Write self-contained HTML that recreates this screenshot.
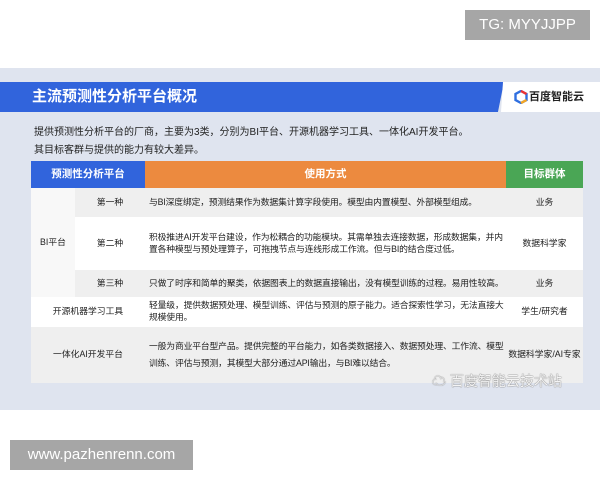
<!DOCTYPE html>
<html><head><meta charset="utf-8"><style>
*{margin:0;padding:0;box-sizing:border-box}
body{width:600px;height:480px;background:#fff;position:relative;overflow:hidden;font-family:"Liberation Sans","Noto Sans CJK SC",sans-serif;color:#222}
.abs{position:absolute}
.tg{left:465px;top:10px;width:125px;height:30px;background:#a6a6a6;color:#fff;font-size:15px;line-height:30px;text-align:center}
.wm{left:10px;top:440px;width:183px;height:30px;background:#a6a6a6;color:#fff;font-size:15px;line-height:30px;text-align:center}
.slide{left:0;top:68px;width:600px;height:342px;background:#dfe4ef}
.title{left:0;top:82px;width:504px;height:30px;background:#3164dc;clip-path:polygon(0 0,100% 0,98.8% 100%,0 100%);color:#fff;font-weight:bold;font-size:15px;line-height:30px;padding-left:32px}
.logo{left:501px;top:82px;width:99px;height:30px;background:#fff;clip-path:polygon(2px 0,100% 0,100% 100%,0 100%);font-size:11px;font-weight:bold;line-height:30px;padding-left:28px;color:#222}
.intro{left:34px;font-size:10px;color:#222}
.c{position:absolute;display:flex;align-items:center;justify-content:center;font-size:8.8px;text-align:center;line-height:1.35}
.l{justify-content:flex-start;text-align:left;padding-left:4px;letter-spacing:-0.15px;width:363px!important}
.h{color:#fff;font-weight:bold;font-size:10.5px}
</style></head><body>
<div class="abs tg">TG: MYYJJPP</div>
<div class="abs slide"></div>
<div class="abs title">主流预测性分析平台概况</div>
<div class="abs logo">百度智能云</div>
<svg class="abs" style="left:514px;top:90px" width="14" height="14" viewBox="0 0 14 14"><path d="M7 1 L12.5 4 L12.5 10 L7 13 L1.5 10 L1.5 4 Z" fill="none" stroke="#2f6fe0" stroke-width="2.4"/><path d="M7 1 L12.5 4" stroke="#e33" stroke-width="2.4"/><path d="M12.5 10 L7 13" stroke="#f5a623" stroke-width="2.4"/></svg>
<div class="abs intro" style="top:123px">提供预测性分析平台的厂商，主要为3类，分别为BI平台、开源机器学习工具、一体化AI开发平台。</div>
<div class="abs intro" style="top:141px">其目标客群与提供的能力有较大差异。</div>

<div class="c h" style="left:31px;top:161px;width:114px;height:27px;background:#3164dc">预测性分析平台</div>
<div class="c h" style="left:145px;top:161px;width:361px;height:27px;background:#ec8a3f">使用方式</div>
<div class="c h" style="left:506px;top:161px;width:77px;height:27px;background:#4aa655">目标群体</div>

<div class="c" style="left:31px;top:188px;width:44px;height:109px;background:#f8f8f8">BI平台</div>
<div class="c" style="left:75px;top:188px;width:70px;height:29px;background:#efefef">第一种</div>
<div class="c l" style="left:145px;top:188px;height:29px;background:#efefef">与BI深度绑定，预测结果作为数据集计算字段使用。模型由内置模型、外部模型组成。</div>
<div class="c" style="left:506px;top:188px;width:77px;height:29px;background:#efefef">业务</div>

<div class="c" style="left:75px;top:217px;width:70px;height:53px;background:#fff">第二种</div>
<div class="c l" style="left:145px;top:217px;height:53px;background:#fff">积极推进AI开发平台建设，作为松耦合的功能模块。其需单独去连接数据，形成数据集，并内置各种模型与预处理算子，可拖拽节点与连线形成工作流。但与BI的结合度过低。</div>
<div class="c" style="left:506px;top:217px;width:77px;height:53px;background:#fff">数据科学家</div>

<div class="c" style="left:75px;top:270px;width:70px;height:27px;background:#efefef">第三种</div>
<div class="c l" style="left:145px;top:270px;height:27px;background:#efefef;white-space:nowrap">只做了时序和简单的聚类，依据图表上的数据直接输出，没有模型训练的过程。易用性较高。</div>
<div class="c" style="left:506px;top:270px;width:77px;height:27px;background:#efefef">业务</div>

<div class="c" style="left:31px;top:297px;width:114px;height:30px;background:#fff">开源机器学习工具</div>
<div class="c l" style="left:145px;top:297px;height:30px;background:#fff">轻量级，提供数据预处理、模型训练、评估与预测的原子能力。适合探索性学习，无法直接大规模使用。</div>
<div class="c" style="left:506px;top:297px;width:77px;height:30px;background:#fff">学生/研究者</div>

<div class="c" style="left:31px;top:327px;width:114px;height:56px;background:#efefef">一体化AI开发平台</div>
<div class="c l" style="left:145px;top:327px;height:56px;background:#efefef;line-height:1.9">一般为商业平台型产品。提供完整的平台能力，如各类数据接入、数据预处理、工作流、模型训练、评估与预测，其模型大部分通过API输出，与BI难以结合。</div>
<div class="c" style="left:506px;top:327px;width:77px;height:56px;background:#efefef">数据科学家/AI专家</div>

<div class="abs" style="left:432px;top:371px;font-size:14px;color:#f4f4f4;text-shadow:0 0 1px #777,0 0 1px #777">☁ 百度智能云技术站</div>
<div class="abs wm">www.pazhenrenn.com</div>
</body></html>
